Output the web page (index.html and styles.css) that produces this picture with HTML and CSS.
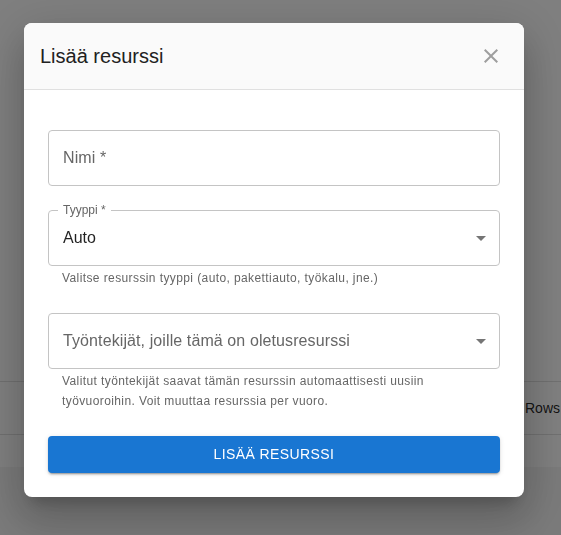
FILE: index.html
```html
<!DOCTYPE html>
<html lang="fi">
<head>
<meta charset="utf-8">
<title>Lisää resurssi</title>
<link rel="stylesheet" href="styles.css">
</head>
<body>
<div class="page">
  <div class="page-content"></div>
  <div class="pagination">
    <span class="rows-label">Rows</span>
  </div>
  <div class="page-foot"></div>
</div>

<div class="backdrop">
  <div class="dialog" role="dialog">
    <div class="dialog-header">
      <h2 class="dialog-title">Lisää resurssi</h2>
      <svg class="close-icon" viewBox="0 0 24 24" width="24" height="24" aria-label="Sulje"><path d="M19 6.41L17.59 5 12 10.59 6.41 5 5 6.41 10.59 12 5 17.59 6.41 19 12 13.41 17.59 19 19 17.59 13.41 12z"/></svg>
    </div>
    <div class="dialog-body">
      <div class="field-group">
        <div class="field">
          <span class="placeholder">Nimi *</span>
        </div>
      </div>
      <div class="field-group">
        <div class="field field-select">
          <span class="notch-label">Tyyppi *</span>
          <span class="value">Auto</span>
          <svg class="arrow" viewBox="0 0 24 24" width="24" height="24"><path d="M7 10l5 5 5-5z"/></svg>
        </div>
        <p class="helper">Valitse resurssin tyyppi (auto, pakettiauto, työkalu, jne.)</p>
      </div>
      <div class="field-group">
        <div class="field field-select">
          <span class="placeholder">Työntekijät, joille tämä on oletusresurssi</span>
          <svg class="arrow" viewBox="0 0 24 24" width="24" height="24"><path d="M7 10l5 5 5-5z"/></svg>
        </div>
        <p class="helper">Valitut työntekijät saavat tämän resurssin automaattisesti uusiin työvuoroihin. Voit muuttaa resurssia per vuoro.</p>
      </div>
      <button class="submit">Lisää resurssi</button>
    </div>
  </div>
</div>
</body>
</html>
```

FILE: styles.css
```css
* { box-sizing: border-box; }

html, body {
  margin: 0;
  padding: 0;
  height: 100%;
}

body {
  background: #f5f5f5;
  font-family: "Liberation Sans", Arial, sans-serif;
  overflow: hidden;
}

.page {
  background: #ffffff;
  height: 467px;
  display: flex;
  flex-direction: column;
}

.page-content { flex: 1; }

.pagination {
  height: 54px;
  border-top: 1px solid #e0e0e0;
  border-bottom: 1px solid #e0e0e0;
  display: flex;
  align-items: center;
  padding-left: 525px;
  white-space: nowrap;
}

.rows-label {
  font-size: 14px;
  color: rgba(0, 0, 0, 0.87);
  padding-bottom: 1px;
}

.page-foot { height: 32px; }

.backdrop {
  position: fixed;
  inset: 0;
  background: rgba(0, 0, 0, 0.5);
  display: flex;
  align-items: flex-start;
  padding: 23px 0 0 24px;
}

.dialog {
  width: 500px;
  background: #ffffff;
  border-radius: 8px;
  overflow: hidden;
  box-shadow: 0 11px 15px -7px rgba(0,0,0,0.2), 0 24px 38px 3px rgba(0,0,0,0.14), 0 9px 46px 8px rgba(0,0,0,0.12);
}

.dialog-header {
  height: 67px;
  background: #fafafa;
  border-bottom: 1px solid #e0e0e0;
  display: flex;
  align-items: center;
  justify-content: space-between;
  padding: 0 21px 0 16px;
}

.dialog-title {
  margin: 0;
  font-size: 20px;
  font-weight: 400;
  color: #212121;
  line-height: 1.6;
}

.close-icon {
  fill: #9e9e9e;
  display: block;
}

.dialog-body {
  padding: 40px 24px 24px;
  display: flex;
  flex-direction: column;
  gap: 24px;
}

.field {
  position: relative;
  height: 56px;
  border: 1px solid #c4c4c4;
  border-radius: 4px;
  padding: 0 14px;
  display: flex;
  align-items: center;
  font-size: 16px;
}

.field-select { padding-right: 6px; }

.placeholder {
  color: #666666;
  flex: 1;
  letter-spacing: 0.1px;
}

.value {
  color: rgba(0, 0, 0, 0.87);
  flex: 1;
}

.notch-label {
  position: absolute;
  top: -7px;
  left: 9px;
  padding: 0 5px;
  background: #ffffff;
  font-size: 12px;
  line-height: 12px;
  color: #666666;
}

.arrow {
  fill: #757575;
  display: block;
  flex: none;
}

.helper {
  margin: 3px 14px 0;
  font-size: 12px;
  line-height: 1.66;
  letter-spacing: 0.4px;
  color: #666666;
}

.submit {
  display: block;
  width: 100%;
  height: 37px;
  border: none;
  border-radius: 4px;
  background: #1976d2;
  color: #ffffff;
  font-family: "Liberation Sans", Arial, sans-serif;
  font-size: 14px;
  font-weight: 500;
  letter-spacing: 0.4px;
  text-transform: uppercase;
  box-shadow: 0 3px 1px -2px rgba(0,0,0,0.2), 0 2px 2px 0 rgba(0,0,0,0.14), 0 1px 5px 0 rgba(0,0,0,0.12);
  padding: 0 16px;
}
```
